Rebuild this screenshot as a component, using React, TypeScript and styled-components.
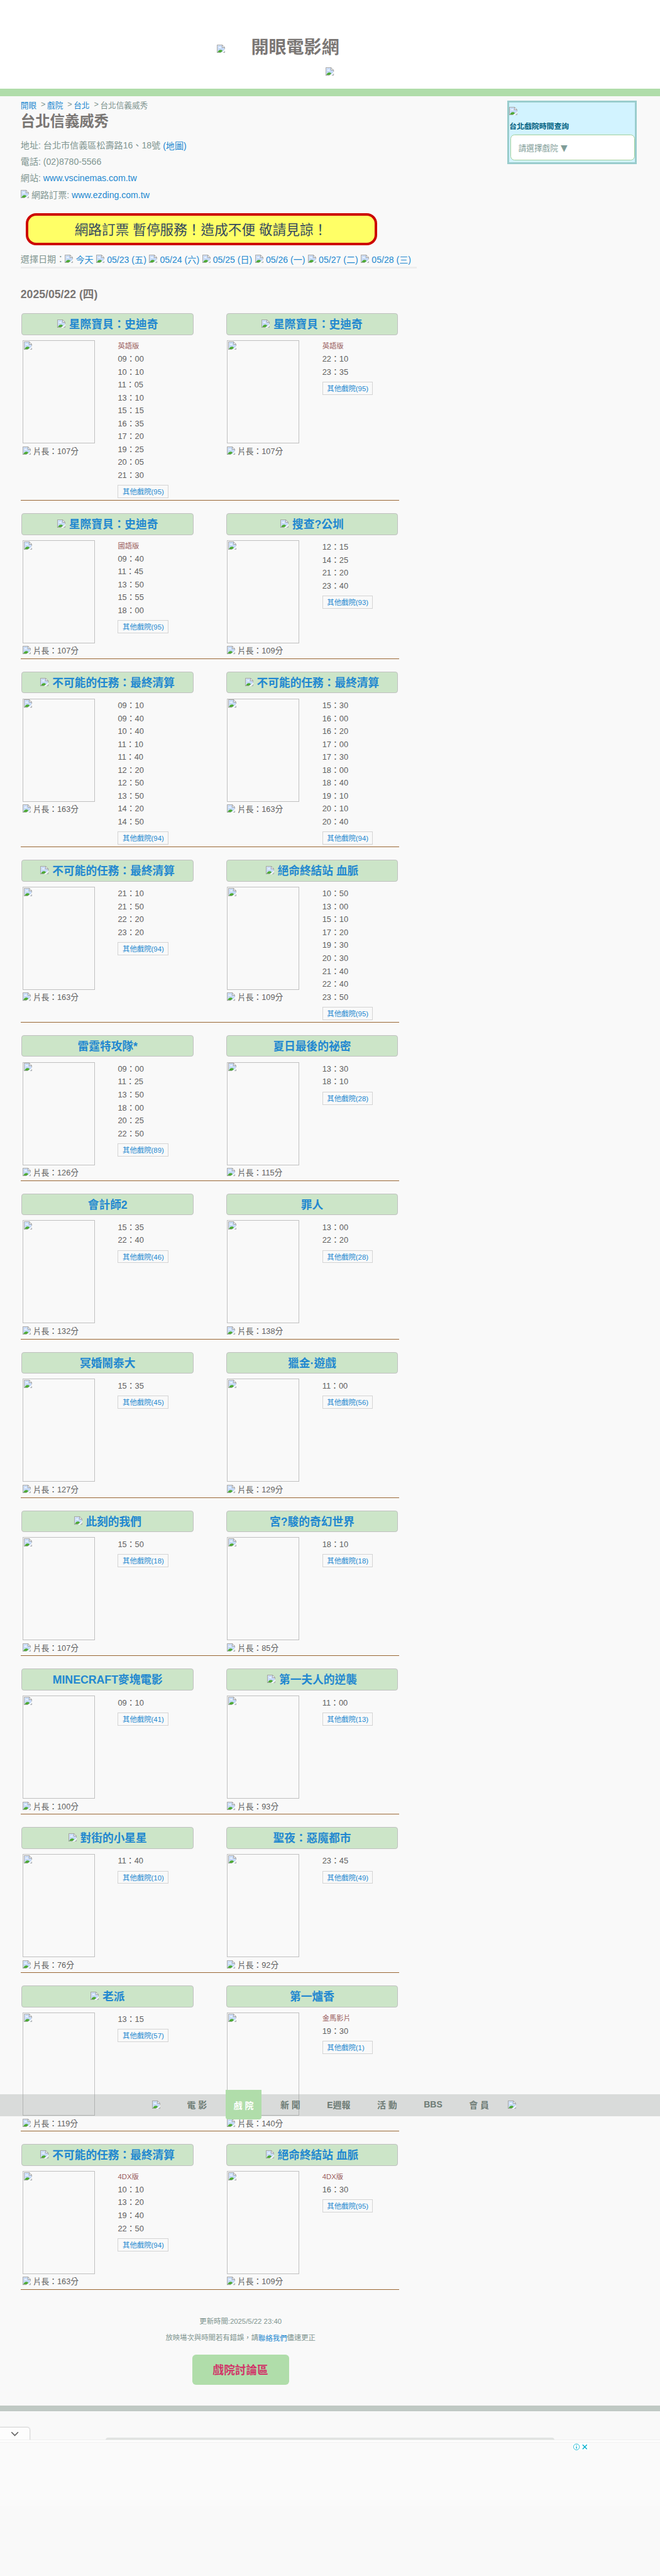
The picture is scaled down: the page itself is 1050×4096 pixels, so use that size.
import React from "react";
import styled, { createGlobalStyle } from "styled-components";

const GlobalStyle = createGlobalStyle`
  html, body { margin: 0; padding: 0; background: #f9f9f9; overflow: hidden; }
  * { box-sizing: border-box; }
`;

const Page = styled.div`
  zoom: 0.8203125;
  position: relative;
  width: 1280px;
  height: 4992px;
  overflow: hidden;
  background: #f9f9f9;
  color: #7f9590;
  font-family: "Liberation Sans", "Noto Sans CJK TC", sans-serif;
  font-size: 17.2px;
  white-space: nowrap;
`;

const Header = styled.header`
  height: 187px;
  background: #fff;
  border-bottom: 15px solid #b0ddaa;
`;

const Brand = styled.div`
  display: flex;
  align-items: flex-start;
  gap: 51px;
  padding: 71px 0 0 420px;
  height: 131px;
  svg { margin-top: 16px; }
`;

const SiteName = styled.h1`
  margin: 0;
  font-size: 34.2px;
  line-height: 44px;
  color: #7a7674;
`;

const HeaderBanner = styled.div`
  display: flex;
  justify-content: center;
`;

const Columns = styled.div`
  display: flex;
  align-items: flex-start;
  height: 4476px;
`;

const Main = styled.main`
  width: 768px;
  margin-left: 40px;
`;

const Crumbs = styled.nav`
  display: flex;
  align-items: center;
  height: 31px;
  font-size: 15.4px;
`;

const Link = styled.a`
  position: relative;
  top: 1px;
  color: #2288d0;
`;

const CrumbArrow = styled.span`
  margin: 0 3.2px 0 8.5px;
`;

const TheaterName = styled.h2`
  margin: 1px 0 13px;
  font-size: 28.5px;
  line-height: 33px;
  color: #7a7674;
`;

const Info = styled.div<{ $h: number }>`
  display: flex;
  align-items: center;
  gap: 4.8px;
  height: ${(p) => p.$h}px;
`;

const Notice = styled.div`
  display: flex;
  align-items: center;
  justify-content: center;
  width: 682px;
  height: 62px;
  margin: 20px 0 10px 10px;
  padding: 0 3px 2px 0;
  border: 5px solid #cc0000;
  border-radius: 20px;
  background: #ffff66;
  color: #34495e;
  font-size: 26.4px;
`;

const Dates = styled.div`
  display: flex;
  align-items: center;
  height: 32px;
`;

const DateItem = styled.span`
  display: flex;
  align-items: center;
  gap: 4.9px;
  margin-right: 5.4px;
`;

const SoftRule = styled.div`
  height: 3px;
  background: #eeeeee;
`;

const DayTitle = styled.h3`
  margin: 38px 0 23px;
  font-size: 21.5px;
  line-height: 26px;
  color: #7a7674;
`;

const FilmRow = styled.section`
  display: grid;
  grid-template-columns: 396.5px 335.5px;
  width: 734px;
  margin-bottom: 24.6px;
  padding-left: 2px;
`;

const RowRule = styled.div`
  grid-column: 1 / -1;
  height: 1.22px;
  margin-left: -2px;
  margin-bottom: -0.22px;
  background: #996633;
`;

const FilmTitle = styled.div`
  display: flex;
  align-items: center;
  justify-content: center;
  gap: 7px;
  width: 333.5px;
  height: 42px;
  margin-bottom: 10px;
  padding-bottom: 2px;
  border: 1px solid #c0c0c0;
  border-radius: 5px;
  background: #cce5c8;
  color: #2288d0;
  font-size: 21.6px;
  font-weight: bold;
`;

const TitleText = styled.span`
  position: relative;
  top: -0.5px;
`;

const FilmBody = styled.div`
  display: flex;
  min-height: 229.5px;
  padding-left: 2px;
`;

const PosterColumn = styled.div`
  width: 184.5px;
`;

const Poster = styled.div`
  width: 140px;
  height: 200px;
  padding: 1px;
  border: 1px solid #c0c0c0;
`;

const Length = styled.div`
  display: flex;
  align-items: center;
  gap: 4.5px;
  height: 27px;
  font-size: 15.5px;
  color: #606060;
`;

const Times = styled.div`
  display: flex;
  flex-direction: column;
  align-items: flex-start;
  padding-top: 0.5px;
`;

const Version = styled.span`
  height: 22.7px;
  line-height: 23.5px;
  font-size: 13.8px;
  color: #995c5c;
`;

const Time = styled.span`
  height: 25.05px;
  line-height: 25.6px;
  font-size: 15.7px;
  color: #606060;
`;

const OtherTheaters = styled.a`
  width: 98px;
  height: 25.5px;
  margin: 6.8px 0 3.9px;
  padding-left: 8px;
  border: 1px solid #d4d4d4;
  color: #2288d0;
  font-size: 13.9px;
  line-height: 24.5px;
`;

const Side = styled.aside`
  width: 250.5px;
  height: 123px;
  margin: 8px 0 0 176px;
  padding-top: 9px;
  border: 4px solid #9acdcd;
  background: #d2f3ff;
  svg { display: block; }
`;

const SideTitle = styled.div`
  margin-top: 10px;
  color: #006080;
  font-size: 14.5px;
  font-weight: bold;
  line-height: 24px;
`;

const Picker = styled.div`
  display: flex;
  align-items: center;
  gap: 5px;
  width: 241.5px;
  height: 50px;
  margin: 3.5px 0 0 2px;
  padding-left: 14.5px;
  border: 2px solid #a0d09a;
  border-radius: 8px;
  background: #fff;
  color: #7f9d98;
  font-size: 15.4px;
`;

const Caret = styled.span`
  font-family: "DejaVu Sans", sans-serif;
  font-size: 17px;
`;

const Closing = styled.footer`
  display: flex;
  flex-direction: column;
  align-items: center;
  width: 853px;
  padding-top: 20px;
  font-size: 13.85px;
`;

const ClosingLine = styled.div`
  height: 32px;
  line-height: 32px;
`;

const ForumButton = styled.a`
  display: flex;
  align-items: center;
  justify-content: center;
  width: 188px;
  height: 58.5px;
  margin-top: 17px;
  border-radius: 7px;
  background: #b0ddaa;
  color: #d13368;
  font-size: 21.5px;
  font-weight: bold;
`;

const FooterBar = styled.div`
  height: 11px;
  background: #c0c9c4;
`;

const NavBar = styled.nav`
  position: absolute;
  left: 0;
  top: 4059px;
  display: flex;
  align-items: center;
  width: 1280px;
  height: 43.5px;
  padding: 0 0 2px 295px;
  background: rgba(143, 148, 146, 0.3);
  color: #6d7b75;
  font-size: 17px;
  font-weight: bold;
`;

const NavIcon = styled.span<{ $before?: number; $after?: number }>`
  display: flex;
  margin-left: ${(p) => p.$before ?? 0}px;
  margin-right: ${(p) => p.$after ?? 0}px;
`;

const NavItem = styled.a<{ $active?: boolean; $w: number }>`
  display: flex;
  align-items: center;
  justify-content: center;
  width: ${(p) => p.$w}px;
  height: ${(p) => (p.$active ? 57 : 43)}px;
  margin: 0 10.6px;
  padding-bottom: ${(p) => (p.$active ? 0 : 1)}px;
  border-radius: 0 0 5px 5px;
  background: ${(p) => (p.$active ? "#b0ddaa" : "transparent")};
  color: ${(p) => (p.$active ? "#fff" : "inherit")};
`;

const AdDock = styled.section`
  position: relative;
  height: 318px;
  padding-top: 31px;
`;

const AdHandle = styled.div`
  display: flex;
  align-items: center;
  justify-content: center;
  width: 57px;
  height: 26px;
  border-radius: 0 5px 0 0;
  background: #fdfdfd;
  box-shadow: 0 0 2px 1px #cfcfcf;
`;

const AdShelf = styled.div`
  position: absolute;
  left: 205px;
  top: 51px;
  width: 870px;
  height: 5px;
  border-radius: 5px 5px 0 0;
  background: #e0e3e1;
`;

const AdEdge = styled.div`
  position: relative;
  height: 5px;
  margin-top: -1px;
  background: #fdfdfd;
  border-bottom: 1px solid #f2f2f2;
  box-shadow: 0 -1px 1px #ececec;
`;

const AdPane = styled.div`
  display: flex;
  gap: 1px;
  align-items: flex-start;
  height: 123px;
  padding: 1px 0 0 1111px;
  background: #fafafa;
`;

const AdMark = styled.svg`
  width: 15px;
  height: 14px;
  background: #fff;
`;

const PictureIcon = styled.svg`
  flex-shrink: 0;
  width: 16px;
  height: 16px;
`;

const MissingImage = () => (
  <PictureIcon viewBox="0 0 16 16">
    <path d="M.5.5h10l5 5v10H.5z" fill="#fff" />
    <path d="M1.5 1.5h9v4.5h4v9h-13z" fill="#c5d9f7" />
    <path d="M3 6.5c0-1 .8-1.5 1.5-1.3.5-1.5 2.7-1.4 3 .2 1 0 1.3.5 1.3 1.1z" fill="#fff" />
    <path d="M1.5 15c1-3.5 3.2-5 5.5-5 2 0 3.3.8 4.2 2L8 15z" fill="#4faa33" />
    <path d="M10.5 1v4.5H15z" fill="#fff" />
    <path d="M.5 16V.5h10l5 5V9M10.5.5v5h5M0 15.5h7.5M12 15.5h3.5V12" fill="none" stroke="#8e8e8e" />
    <path d="M8 16l8-6.5v2L11 16z" fill="#fff" />
  </PictureIcon>
);

type Film = {
  name: string;
  icon?: boolean;
  version?: string;
  times: string;
  others: number;
  length: number;
};

const rows: [Film, Film][] = [
  [
    { name: "星際寶貝：史迪奇", icon: true, version: "英語版", times: "09：00 10：10 11：05 13：10 15：15 16：35 17：20 19：25 20：05 21：30", others: 95, length: 107 },
    { name: "星際寶貝：史迪奇", icon: true, version: "英語版", times: "22：10 23：35", others: 95, length: 107 },
  ],
  [
    { name: "星際寶貝：史迪奇", icon: true, version: "國語版", times: "09：40 11：45 13：50 15：55 18：00", others: 95, length: 107 },
    { name: "搜查?公圳", icon: true, times: "12：15 14：25 21：20 23：40", others: 93, length: 109 },
  ],
  [
    { name: "不可能的任務：最終清算", icon: true, times: "09：10 09：40 10：40 11：10 11：40 12：20 12：50 13：50 14：20 14：50", others: 94, length: 163 },
    { name: "不可能的任務：最終清算", icon: true, times: "15：30 16：00 16：20 17：00 17：30 18：00 18：40 19：10 20：10 20：40", others: 94, length: 163 },
  ],
  [
    { name: "不可能的任務：最終清算", icon: true, times: "21：10 21：50 22：20 23：20", others: 94, length: 163 },
    { name: "絕命終結站 血脈", icon: true, times: "10：50 13：00 15：10 17：20 19：30 20：30 21：40 22：40 23：50", others: 95, length: 109 },
  ],
  [
    { name: "雷霆特攻隊*", times: "09：00 11：25 13：50 18：00 20：25 22：50", others: 89, length: 126 },
    { name: "夏日最後的祕密", times: "13：30 18：10", others: 28, length: 115 },
  ],
  [
    { name: "會計師2", times: "15：35 22：40", others: 46, length: 132 },
    { name: "罪人", times: "13：00 22：20", others: 28, length: 138 },
  ],
  [
    { name: "冥婚鬧泰大", times: "15：35", others: 45, length: 127 },
    { name: "獵金·遊戲", times: "11：00", others: 56, length: 129 },
  ],
  [
    { name: "此刻的我們", icon: true, times: "15：50", others: 18, length: 107 },
    { name: "宮?駿的奇幻世界", times: "18：10", others: 18, length: 85 },
  ],
  [
    { name: "MINECRAFT麥塊電影", times: "09：10", others: 41, length: 100 },
    { name: "第一夫人的逆襲", icon: true, times: "11：00", others: 13, length: 93 },
  ],
  [
    { name: "對街的小星星", icon: true, times: "11：40", others: 10, length: 76 },
    { name: "聖夜：惡魔都市", times: "23：45", others: 49, length: 92 },
  ],
  [
    { name: "老派", icon: true, times: "13：15", others: 57, length: 119 },
    { name: "第一爐香", version: "金馬影片", times: "19：30", others: 1, length: 140 },
  ],
  [
    { name: "不可能的任務：最終清算", icon: true, version: "4DX版", times: "10：10 13：20 19：40 22：50", others: 94, length: 163 },
    { name: "絕命終結站 血脈", icon: true, version: "4DX版", times: "16：30", others: 95, length: 109 },
  ],
];

const dates = ["今天", "05/23 (五)", "05/24 (六)", "05/25 (日)", "05/26 (一)", "05/27 (二)", "05/28 (三)"];

const navItems: [string, number][] = [
  ["電 影", 69],
  ["戲 院", 69.5],
  ["新 聞", 69],
  ["E週報", 76.5],
  ["活 動", 69],
  ["BBS", 67],
  ["會 員", 69],
];

const FilmCard = ({ film }: { film: Film }) => (
  <div>
    <FilmTitle>
      {film.icon && <MissingImage />}
      <TitleText>{film.name}</TitleText>
    </FilmTitle>
    <FilmBody>
      <PosterColumn>
        <Poster>
          <MissingImage />
        </Poster>
        <Length>
          <MissingImage />
          片長：{film.length}分
        </Length>
      </PosterColumn>
      <Times>
        {film.version && <Version>{film.version}</Version>}
        {film.times.split(" ").map((t) => (
          <Time key={t}>{t}</Time>
        ))}
        <OtherTheaters>其他戲院({film.others})</OtherTheaters>
      </Times>
    </FilmBody>
  </div>
);

export default function App() {
  return (
    <Page>
      <GlobalStyle />
      <Header>
        <Brand>
          <MissingImage />
          <SiteName>開眼電影網</SiteName>
        </Brand>
        <HeaderBanner>
          <MissingImage />
        </HeaderBanner>
      </Header>

      <Columns>
        <Main>
          <Crumbs>
            {["開眼", "戲院", "台北"].map((c) => (
              <React.Fragment key={c}>
                <Link>{c}</Link>
                <CrumbArrow>&gt;</CrumbArrow>
              </React.Fragment>
            ))}
            台北信義威秀
          </Crumbs>
          <TheaterName>台北信義威秀</TheaterName>
          <Info $h={31}>
            地址: 台北市信義區松壽路16、18號 <Link>(地圖)</Link>
          </Info>
          <Info $h={32}>電話: (02)8780-5566</Info>
          <Info $h={31.5}>
            網站: <Link>www.vscinemas.com.tw</Link>
          </Info>
          <Info $h={34}>
            <MissingImage />
            網路訂票: <Link>www.ezding.com.tw</Link>
          </Info>
          <Notice>網路訂票 暫停服務！造成不便 敬請見諒！</Notice>
          <Dates>
            選擇日期：
            {dates.map((d) => (
              <DateItem key={d}>
                <MissingImage />
                <Link>{d}</Link>
              </DateItem>
            ))}
          </Dates>
          <SoftRule />
          <DayTitle>2025/05/22 (四)</DayTitle>

          {rows.map(([left, right], i) => (
            <FilmRow key={i}>
              <FilmCard film={left} />
              <FilmCard film={right} />
              <RowRule />
            </FilmRow>
          ))}

          <Closing>
            <ClosingLine>更新時間:2025/5/22 23:40</ClosingLine>
            <ClosingLine>
              放映場次與時間若有錯誤，請<Link>聯絡我們</Link>儘速更正
            </ClosingLine>
            <ForumButton>戲院討論區</ForumButton>
          </Closing>
        </Main>

        <Side>
          <MissingImage />
          <SideTitle>台北戲院時間查詢</SideTitle>
          <Picker>
            請選擇戲院 <Caret>▼</Caret>
          </Picker>
        </Side>
      </Columns>

      <FooterBar />

      <AdDock>
        <AdShelf />
        <AdHandle>
          <svg width="16" height="10" viewBox="0 0 16 10">
            <path d="M1.5 1.5L8 8l6.5-6.5" fill="none" stroke="#616161" strokeWidth="2" />
          </svg>
        </AdHandle>
        <AdEdge />
        <AdPane>
          <AdMark viewBox="0 0 15 14">
            <circle cx="7.5" cy="7" r="5.8" fill="none" stroke="#00aecd" />
            <path d="M7.5 6v4.5M7.5 3.2v1.5" stroke="#00aecd" strokeWidth="1.6" />
          </AdMark>
          <AdMark viewBox="0 0 15 14">
            <path d="M3.5 2.8l8.4 8.4M11.9 2.8l-8.4 8.4" stroke="#00aecd" strokeWidth="1.7" />
          </AdMark>
        </AdPane>
      </AdDock>

      <NavBar>
        <NavIcon $after={26}>
          <MissingImage />
        </NavIcon>
        {navItems.map(([label, w]) => (
          <NavItem key={label} $w={w} $active={label === "戲 院"}>
            {label}
          </NavItem>
        ))}
        <NavIcon $before={11}>
          <MissingImage />
        </NavIcon>
      </NavBar>
    </Page>
  );
}
